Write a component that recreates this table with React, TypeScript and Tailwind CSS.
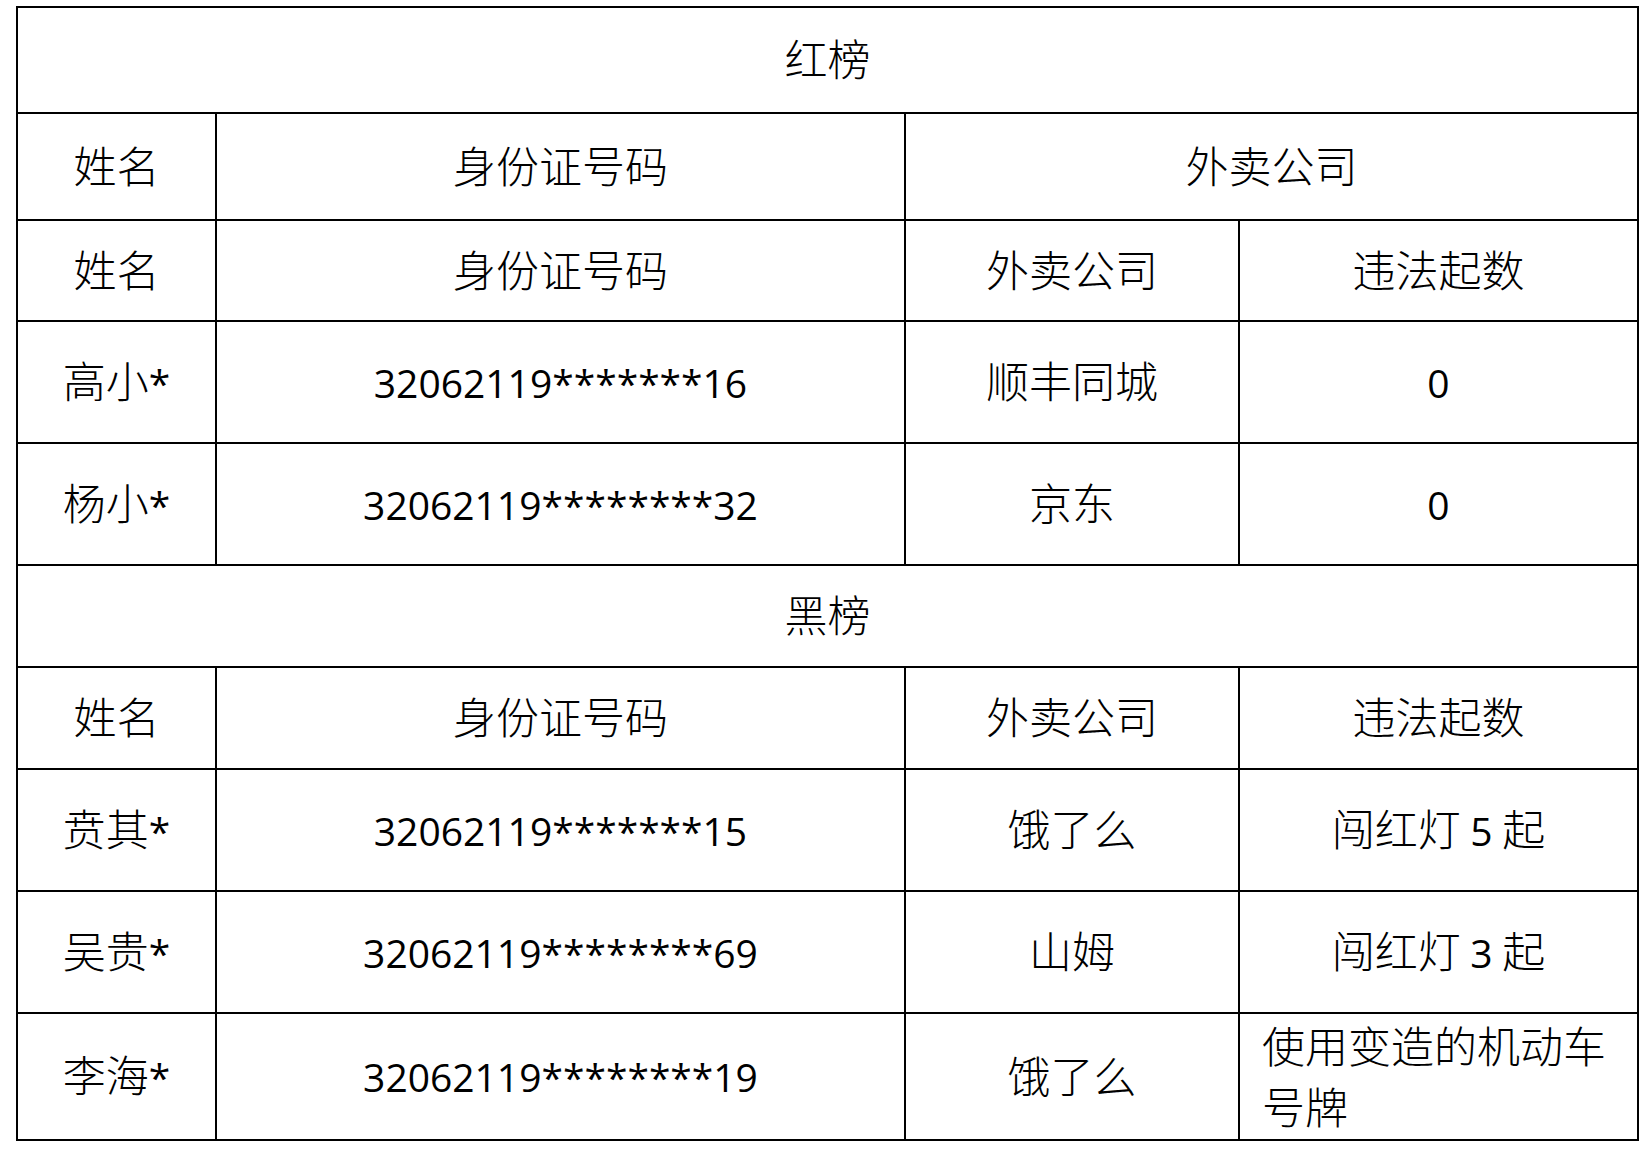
import React from "react";

type Row = { name: string; id: string; company: string; count: string };

const redList: Row[] = [
  { name: "高小*", id: "32062119*******16", company: "顺丰同城", count: "0" },
  { name: "杨小*", id: "32062119********32", company: "京东", count: "0" },
];

const blackList: Row[] = [
  { name: "贲其*", id: "32062119*******15", company: "饿了么", count: "闯红灯 5 起" },
  { name: "吴贵*", id: "32062119********69", company: "山姆", count: "闯红灯 3 起" },
  { name: "李海*", id: "32062119********19", company: "饿了么", count: "使用变造的机动车号牌" },
];

const cell = "border-2 border-black text-center align-middle px-0 pt-0 pb-[5px]";

// latin runs (digits, asterisks) get a regular-weight sans, CJK stays light
function Mixed({ text }: { text: string }) {
  const parts = text.split(/([\x21-\x7E]+)/);
  return (
    <>
      {parts.map((p, i) =>
        /^[\x21-\x7E]+$/.test(p) ? (
          <span key={i} className="font-['Open_Sans'] font-normal text-[39px]">
            {p}
          </span>
        ) : (
          <React.Fragment key={i}>{p}</React.Fragment>
        ),
      )}
    </>
  );
}

function HeaderRow({ height }: { height: string }) {
  return (
    <tr className={height}>
      <td className={cell}>姓名</td>
      <td className={cell}>身份证号码</td>
      <td className={cell}>外卖公司</td>
      <td className={cell}>违法起数</td>
    </tr>
  );
}

function DataRow({ row, height, wrap }: { row: Row; height: string; wrap?: boolean }) {
  return (
    <tr className={height}>
      <td className={cell}>
        <Mixed text={row.name} />
      </td>
      <td className={cell}>
        <Mixed text={row.id} />
      </td>
      <td className={cell}>{row.company}</td>
      {wrap ? (
        <td className="border-2 border-black text-left align-middle pl-[22px] pr-[12px] pt-0 pb-[3px] leading-[61px]">
          {row.count}
        </td>
      ) : (
        <td className={`${cell} whitespace-pre`}>
          <Mixed text={row.count} />
        </td>
      )}
    </tr>
  );
}

export default function App() {
  return (
    <div className="min-h-[1152px] w-[1650px] bg-white pt-[6px] pl-[16px]">
      <table className="table-fixed border-collapse w-[1621px] text-black text-[43px] font-light font-['Noto_Sans_CJK_SC',sans-serif]">
        <colgroup>
          <col className="w-[199px]" />
          <col className="w-[689px]" />
          <col className="w-[334px]" />
          <col className="w-[399px]" />
        </colgroup>
        <tbody>
          <tr className="h-[106px]">
            <td colSpan={4} className={cell}>红榜</td>
          </tr>
          <tr className="h-[107px]">
            <td className={cell}>姓名</td>
            <td className={cell}>身份证号码</td>
            <td colSpan={2} className={cell}>外卖公司</td>
          </tr>
          <HeaderRow height="h-[101px]" />
          {redList.map((r) => (
            <DataRow key={r.name} row={r} height="h-[122px]" />
          ))}
          <tr className="h-[102px]">
            <td colSpan={4} className={cell}>黑榜</td>
          </tr>
          <HeaderRow height="h-[102px]" />
          <DataRow row={blackList[0]} height="h-[122px]" />
          <DataRow row={blackList[1]} height="h-[122px]" />
          <DataRow row={blackList[2]} height="h-[127px]" wrap />
        </tbody>
      </table>
    </div>
  );
}
